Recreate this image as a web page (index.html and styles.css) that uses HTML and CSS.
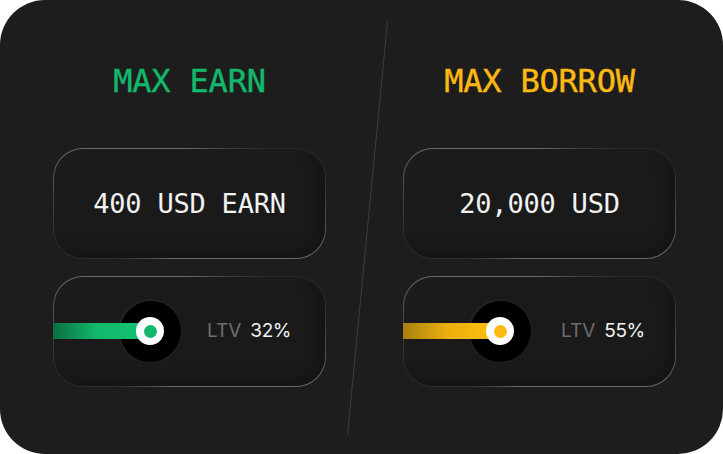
FILE: index.html
```html
<!DOCTYPE html>
<html lang="en">
<head>
<meta charset="utf-8">
<title>Max Earn / Max Borrow</title>
<link rel="stylesheet" href="styles.css">
</head>
<body>
<main class="card">
  <section class="col">
    <h2 class="title title-earn">MAX EARN</h2>
    <div class="box box-amount">400 USD EARN</div>
    <div class="box box-slider">
      <div class="slider slider-earn">
        <span class="well"></span>
        <span class="track"></span>
        <span class="knob"><span class="dot"></span></span>
      </div>
      <div class="ltv"><span class="ltv-label">LTV</span><span class="ltv-value">32%</span></div>
    </div>
  </section>
  <div class="divider">
    <svg width="77" height="454" viewBox="0 0 77 454"><line x1="61.5" y1="21" x2="21.5" y2="435" stroke="#3c3c3c" stroke-width="1"/></svg>
  </div>
  <section class="col">
    <h2 class="title title-borrow">MAX BORROW</h2>
    <div class="box box-amount">20,000 USD</div>
    <div class="box box-slider">
      <div class="slider slider-borrow">
        <span class="well"></span>
        <span class="track"></span>
        <span class="knob"><span class="dot"></span></span>
      </div>
      <div class="ltv ltv-right"><span class="ltv-label">LTV</span><span class="ltv-value">55%</span></div>
    </div>
  </section>
</main>
</body>
</html>
```
FILE: styles.css
```css
html, body {
  margin: 0;
  padding: 0;
  background: #ffffff;
}

.card {
  width: 723px;
  height: 454px;
  box-sizing: border-box;
  background: #1d1d1d;
  border-radius: 45px;
  display: grid;
  grid-template-columns: 273px 77px 273px;
  padding-left: 53px;
  overflow: hidden;
}

.col {
  display: flex;
  flex-direction: column;
  padding-top: 61px;
}

.title {
  margin: 0 0 47px;
  font-family: "DejaVu Sans Mono", monospace;
  font-weight: normal;
  font-size: 32px;
  line-height: 40px;
  height: 40px;
  text-align: center;
  letter-spacing: -0.2px;
  -webkit-text-stroke: 0.4px currentColor;
}

.title-earn { color: #12b86b; }
.title-borrow { color: #fdb913; }

.box {
  box-sizing: border-box;
  height: 111px;
  border-radius: 30px;
  border: 1px solid transparent;
  background:
    linear-gradient(#1a1a1a, #1a1a1a) padding-box,
    conic-gradient(#6a6a6a 0deg, #2a2a2a 55deg, #2a2a2a 75deg, #6a6a6a 115deg, #6a6a6a 200deg, #2a2a2a 235deg, #2a2a2a 255deg, #6a6a6a 295deg, #6a6a6a 360deg) border-box;
  box-shadow: inset 6px 6px 14px rgba(255,255,255,0.02), inset -6px -6px 14px rgba(0,0,0,0.25);
}

.box-amount {
  display: flex;
  align-items: center;
  justify-content: center;
  font-family: "DejaVu Sans Mono", monospace;
  font-size: 27px;
  color: #f2f2f2;
  letter-spacing: -0.2px;
}

.box-slider {
  margin-top: 17px;
  display: flex;
  align-items: center;
  gap: 26px;
}

.slider {
  position: relative;
  width: 127px;
  height: 63px;
  flex: none;
}

.well {
  position: absolute;
  left: 65px;
  top: 0;
  width: 62px;
  height: 62px;
  border-radius: 50%;
  background: #000;
  box-shadow: inset 1px 1px 0 rgba(255,255,255,0.14), 0 0 0 1px rgba(255,255,255,0.04);
}

.track {
  position: absolute;
  left: -1px;
  top: 23px;
  width: 97px;
  height: 16px;
}

.slider-earn .track { background: linear-gradient(90deg, #0b6e42 0%, #12b86b 45%, #14c474 100%); }
.slider-borrow .track { background: linear-gradient(90deg, #a8800f 0%, #ebae0e 45%, #ffc20d 100%); }

.knob {
  position: absolute;
  left: 82px;
  top: 17px;
  width: 28px;
  height: 28px;
  border-radius: 50%;
  background: #ffffff;
  display: flex;
  align-items: center;
  justify-content: center;
}

.dot {
  width: 13px;
  height: 13px;
  border-radius: 50%;
}

.slider-earn .dot { background: #12b86b; }
.slider-borrow .dot { background: #fdb913; }

.ltv {
  font-family: Inter, "Noto Sans", sans-serif;
  font-size: 19px;
  line-height: 24px;
  display: flex;
  gap: 9px;
  margin-top: -1px;
}

.ltv-right { margin-left: 4px; }

.ltv-label { color: #6e6e6e; }
.ltv-value { color: #f2f2f2; letter-spacing: -0.4px; }

.divider {
  display: flex;
}

.divider svg { display: block; }
```
